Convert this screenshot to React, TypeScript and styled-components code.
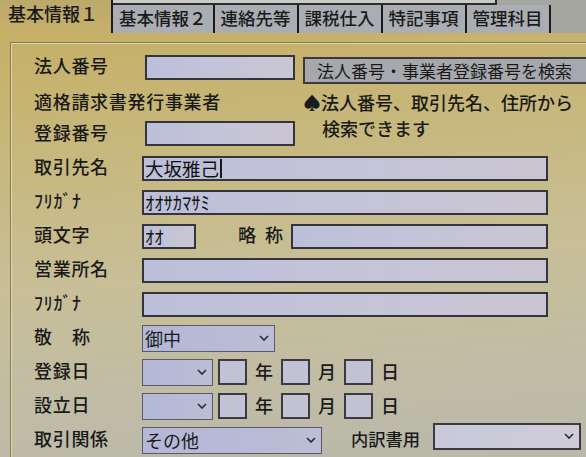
import React from "react";
import styled, { createGlobalStyle, css } from "styled-components";

const FONT = `"Noto Sans CJK JP", "Noto Sans", sans-serif`;

const GlobalStyle = createGlobalStyle`
  html, body { margin: 0; padding: 0; }
  body { width: 586px; height: 457px; overflow: hidden; font-family: ${FONT}; }
  * { box-sizing: border-box; }
`;

const Screen = styled.div`
  width: 586px;
  height: 457px;
  overflow: hidden;
  display: flex;
  flex-direction: column;
  background: #a6a6a1;
  color: #1a1a1a;
  font-family: ${FONT};
  font-size: 18px;
  font-weight: 500;
`;

/* ---------- tabs ---------- */
const TabBar = styled.div`
  display: flex;
  align-items: flex-end;
  height: 33px;
  flex: none;
`;

const ActiveTab = styled.div`
  width: 113px;
  height: 33px;
  padding: 2px 0 0 8px;
  background: linear-gradient(180deg, #bca96a 0%, #c6b06a 100%);
  border-right: 2px solid #1c1c1c;
  font-size: 18px;
  line-height: 22px;
  white-space: nowrap;
`;

const TabGroup = styled.div`
  display: flex;
  flex-direction: column;
  height: 33px;
`;

const FrameStrip = styled.div`
  width: 384px;
  height: 5px;
  flex: none;
  background: #cacac6;
  border-right: 2px solid #2c2c2c;
  border-bottom: 2px solid #2c2c2c;
`;

const TabRow = styled.div`
  display: flex;
  height: 28px;
`;

const Tab = styled.div`
  display: flex;
  align-items: center;
  padding: 0 6px 3px;
  background: #aaaeb2;
  border-right: 2px solid #1c1c1c;
  font-size: 17.5px;
  line-height: 1;
  white-space: nowrap;
`;

/* ---------- panel ---------- */
const Panel = styled.div`
  flex: 1;
  display: flex;
  flex-direction: column;
  padding: 9px 0 0 10px;
  background: linear-gradient(
    175deg,
    #c6b066 0%,
    #c7b77b 25%,
    #c8bf98 55%,
    #c0bca5 80%,
    #b8b8aa 100%
  );
`;

const GroupBox = styled.div`
  flex: 1;
  display: flex;
  flex-direction: column;
  padding: 9px 0 0 23px;
  border-top: 1px solid #857a50;
  border-left: 1px solid #857a50;
  box-shadow: inset 1px 1px 0 #e2d9aa;
`;

const Row = styled.div<{ $h: number }>`
  display: flex;
  align-items: center;
  height: ${(p) => p.$h}px;
  flex: none;
`;

const Block = styled.div`
  display: flex;
  flex: none;
`;

const LeftCol = styled.div`
  width: 262px;
  display: flex;
  flex-direction: column;
`;

const Label = styled.div<{ $spacing?: number }>`
  width: 108px;
  flex: none;
  padding-bottom: 4px;
  letter-spacing: ${(p) => p.$spacing ?? 0.7}px;
  white-space: nowrap;
`;

const QualLine = styled.div`
  height: 34px;
  padding-top: 6px;
  line-height: 26px;
  letter-spacing: 0.7px;
  white-space: nowrap;
`;

const SubLabel = styled.div<{ $ml: number; $spacing?: number; $size?: number }>`
  margin-left: ${(p) => p.$ml}px;
  padding-bottom: 4px;
  letter-spacing: ${(p) => p.$spacing ?? 0}px;
  font-size: ${(p) => p.$size ?? 18}px;
  white-space: nowrap;
`;

const Note = styled.div`
  margin-left: 8px;
  padding: 7px 0 0 19px;
  text-indent: -19px;
  line-height: 26px;
  letter-spacing: 0px;
  width: 290px;
`;

const TextInput = styled.div<{ $w: number; $ml?: number }>`
  width: ${(p) => p.$w}px;
  height: 25px;
  margin-left: ${(p) => p.$ml ?? 0}px;
  flex: none;
  display: flex;
  align-items: center;
  padding-left: 1px;
  border: 2px solid #34343c;
  background: linear-gradient(90deg, #bcbfd9 0%, #c4c4d9 50%, #cac5d2 100%);
  color: #121212;
  font-size: 18.5px;
  font-weight: 400;
  line-height: 1;
  white-space: nowrap;
  overflow: hidden;
`;

const Caret = styled.span`
  display: inline-block;
  width: 1.5px;
  height: 19px;
  margin-left: 1px;
  background: #1a1a1a;
`;

const SearchButton = styled.div`
  width: 300px;
  height: 27px;
  margin: 6px 0 0 8px;
  flex: none;
  display: flex;
  align-items: center;
  padding-left: 12px;
  background: #a6a8ad;
  border: 2px solid #3a3a3e;
  border-right: none;
  font-size: 17px;
  font-weight: 400;
  line-height: 1;
  white-space: nowrap;
`;

const SelectBox = styled.div<{ $w: number; $ml?: number; $light?: boolean }>`
  width: ${(p) => p.$w}px;
  height: 27px;
  margin-left: ${(p) => p.$ml ?? 0}px;
  flex: none;
  display: flex;
  align-items: center;
  justify-content: space-between;
  padding: 0 5px 0 2px;
  font-size: 18px;
  font-weight: 400;
  line-height: 1;
  white-space: nowrap;
  ${(p) =>
    p.$light
      ? css`
          border: 2px solid #3c3c40;
          background: linear-gradient(90deg, #c9c9da 0%, #d0cdda 100%);
          margin-bottom: 8px;
        `
      : css`
          border: 1.5px solid #5a5a68;
          background: linear-gradient(90deg, #b3b8d6 0%, #bcbdd6 100%);
        `}
`;

const DateBox = styled.div<{ $ml: number }>`
  width: 29px;
  height: 26px;
  margin-left: ${(p) => p.$ml}px;
  flex: none;
  border: 2px solid #3a3a40;
  background: #c1c2d4;
`;

const Unit = styled.div`
  margin-left: 8px;
  font-size: 18px;
  padding-bottom: 2px;
`;

const Chevron = () => (
  <svg width="10" height="6" viewBox="0 0 10 6">
    <polyline points="1,1 5,5 9,1" fill="none" stroke="#2a2a2e" strokeWidth="1.6" />
  </svg>
);

const DateRow = ({ label }: { label: string }) => (
  <Row $h={34}>
    <Label>{label}</Label>
    <SelectBox $w={71}>
      <span />
      <Chevron />
    </SelectBox>
    <DateBox $ml={5} />
    <Unit>年</Unit>
    <DateBox $ml={8} />
    <Unit>月</Unit>
    <DateBox $ml={8} />
    <Unit>日</Unit>
  </Row>
);

export default function App() {
  return (
    <>
      <GlobalStyle />
      <Screen>
        <TabBar>
          <ActiveTab>基本情報１</ActiveTab>
          <TabGroup>
            <FrameStrip />
            <TabRow>
              <Tab>基本情報２</Tab>
              <Tab>連絡先等</Tab>
              <Tab>課税仕入</Tab>
              <Tab>特記事項</Tab>
              <Tab>管理科目</Tab>
            </TabRow>
          </TabGroup>
        </TabBar>
        <Panel>
          <GroupBox>
            <Row $h={30}>
              <Label>法人番号</Label>
              <TextInput $w={150} $ml={3} />
              <SearchButton>法人番号・事業者登録番号を検索</SearchButton>
            </Row>
            <Block>
              <LeftCol>
                <QualLine>適格請求書発行事業者</QualLine>
                <Row $h={35}>
                  <Label>登録番号</Label>
                  <TextInput $w={150} $ml={3} />
                </Row>
              </LeftCol>
              <Note>
                ♠法人番号、取引先名、住所から
                <br />
                検索できます
              </Note>
            </Block>
            <Row $h={34}>
              <Label>取引先名</Label>
              <TextInput $w={406}>
                大坂雅己
                <Caret />
              </TextInput>
            </Row>
            <Row $h={34}>
              <Label>ﾌﾘｶﾞﾅ</Label>
              <TextInput $w={406}>ｵｵｻｶﾏｻﾐ</TextInput>
            </Row>
            <Row $h={34}>
              <Label>頭文字</Label>
              <TextInput $w={54}>ｵｵ</TextInput>
              <SubLabel $ml={42} $spacing={9}>
                略称
              </SubLabel>
              <TextInput $w={257} $ml={-1} />
            </Row>
            <Row $h={34}>
              <Label>営業所名</Label>
              <TextInput $w={406} />
            </Row>
            <Row $h={34}>
              <Label>ﾌﾘｶﾞﾅ</Label>
              <TextInput $w={406} />
            </Row>
            <Row $h={34}>
              <Label $spacing={20}>敬称</Label>
              <SelectBox $w={133}>
                <span>御中</span>
                <Chevron />
              </SelectBox>
            </Row>
            <DateRow label="登録日" />
            <DateRow label="設立日" />
            <Row $h={34}>
              <Label>取引関係</Label>
              <SelectBox $w={180}>
                <span>その他</span>
                <Chevron />
              </SelectBox>
              <SubLabel $ml={29} $size={17.3}>
                内訳書用
              </SubLabel>
              <SelectBox $w={148} $ml={13} $light>
                <span />
                <Chevron />
              </SelectBox>
            </Row>
          </GroupBox>
        </Panel>
      </Screen>
    </>
  );
}
